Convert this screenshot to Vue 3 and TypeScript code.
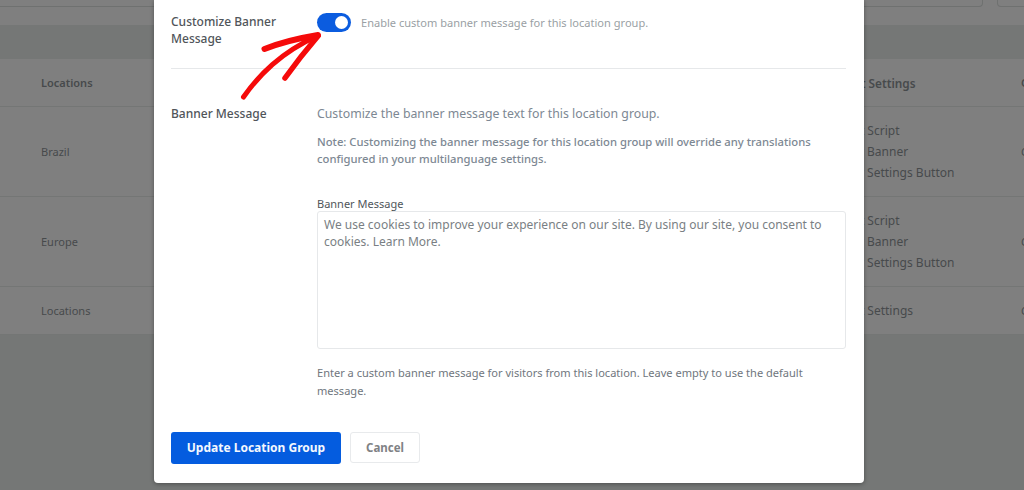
<script setup lang="ts">
interface Row {
  name: string;
  lines: string[];
}

const rows: Row[] = [
  { name: 'Brazil', lines: ['Default Script', 'Display Banner', 'Display Settings Button'] },
  { name: 'Europe', lines: ['Default Script', 'Display Banner', 'Display Settings Button'] },
];
</script>

<template>
  <div class="page">
    <div class="toolbar">
      <div class="field field-main"></div>
      <div class="field field-side"></div>
    </div>
    <div class="band"></div>
    <div class="row row-head">
      <span class="col-name">Locations</span>
      <span class="col-settings">Default Settings</span>
      <span class="col-last">Custom</span>
    </div>
    <div v-for="row in rows" :key="row.name" class="row row-body">
      <span class="col-name">{{ row.name }}</span>
      <div class="col-settings">
        <div v-for="line in row.lines" :key="line" class="line">{{ line }}</div>
      </div>
      <span class="col-last">Custom</span>
    </div>
    <div class="row row-foot">
      <span class="col-name">Locations</span>
      <span class="col-settings">Default Settings</span>
      <span class="col-last">Custom</span>
    </div>

    <div class="modal">
      <section class="setting setting-toggle">
        <div class="label">Customize Banner Message</div>
        <div class="toggle-wrap">
          <span class="toggle"><span class="knob"></span></span>
          <span class="toggle-desc">Enable custom banner message for this location group.</span>
        </div>
      </section>
      <hr class="divider" />
      <section class="setting">
        <div class="label">Banner Message</div>
        <div class="setting-body">
          <p class="intro">Customize the banner message text for this location group.</p>
          <p class="note">Note: Customizing the banner message for this location group will override any translations configured in your multilanguage settings.</p>
          <label class="field-label">Banner Message</label>
          <div class="textarea">We use cookies to improve your experience on our site. By using our site, you consent to cookies. Learn More.</div>
          <p class="help">Enter a custom banner message for visitors from this location. Leave empty to use the default message.</p>
        </div>
      </section>
      <div class="actions">
        <button class="btn btn-primary">Update Location Group</button>
        <button class="btn btn-cancel">Cancel</button>
      </div>
    </div>

    <svg class="arrow" width="1024" height="490" viewBox="0 0 1024 490" fill="none">
      <path d="M243.500 97C259 75 280 53 318 35.500" stroke="#f50a0a" stroke-width="5" stroke-linecap="round" />
      <path d="M264.500 49C282 42 300 38 318 35" stroke="#f50a0a" stroke-width="6" stroke-linecap="round" />
      <path d="M318 36C306 50 295 64 285 78" stroke="#f50a0a" stroke-width="5.500" stroke-linecap="round" />
    </svg>
  </div>
</template>

<style>
html,
body {
  margin: 0;
  background: #757776;
}
</style>

<style scoped>
.page {
  position: relative;
  width: 1024px;
  height: 490px;
  overflow: hidden;
  background: #757776;
  font-family: "Noto Sans", sans-serif;
  font-size: 11px;
  color: #474a4c;
}
.toolbar {
  height: 25px;
  background: #7f7f7f;
  position: relative;
  display: flex;
  gap: 14px;
  margin-left: -10px;
  width: 1060px;
}
.field {
  height: 6px;
  margin-top: 0;
  border: 1px solid #6f7170;
  border-top: none;
  border-radius: 0 0 4px 4px;
  box-sizing: content-box;
}
.field-main {
  width: 991px;
}
.field-side {
  width: 40px;
}
.band {
  height: 34px;
}
.row {
  display: flex;
  align-items: center;
  background: #7f7f7f;
  border-bottom: 1px solid #747675;
  box-sizing: border-box;
  padding-left: 41px;
  white-space: nowrap;
}
.row-head {
  height: 48px;
  font-weight: 600;
}
.row-body {
  height: 90px;
}
.row-foot {
  height: 48px;
}
.col-name {
  width: 782px;
  flex: none;
}
.col-settings {
  width: 198px;
  flex: none;
  font-size: 12px;
}
.row-head .col-settings {
  font-size: 11.800px;
}
.col-last {
  flex: none;
}
.line {
  line-height: 21.300px;
}
.setting {
  display: flex;
}
.modal {
  position: absolute;
  left: 154px;
  top: 0;
  width: 710px;
  height: 483px;
  box-sizing: border-box;
  padding: 13px 18px 0 17px;
  background: #fff;
  border-radius: 0 0 4px 4px;
  box-shadow: 0 1px 4px rgba(0, 0, 0, 0.35);
  display: flex;
  flex-direction: column;
}
.label {
  width: 146px;
  flex: none;
  font-weight: 500;
  font-size: 12px;
  line-height: 17px;
  color: #50555a;
  padding-right: 20px;
  box-sizing: border-box;
}
.setting-toggle {
  height: 55px;
}
.toggle-wrap {
  display: flex;
  align-items: flex-start;
  gap: 10px;
}
.toggle {
  width: 34px;
  height: 19px;
  border-radius: 10px;
  background: #0b5cdf;
  position: relative;
  flex: none;
}
.knob {
  position: absolute;
  right: 3px;
  top: 3px;
  width: 13px;
  height: 13px;
  border-radius: 50%;
  background: #fff;
}
.toggle-desc {
  font-size: 11.050px;
  line-height: 19px;
  color: #9a9fa4;
}
.divider {
  border: none;
  border-top: 1px solid #e6e8ea;
  margin: 0 0 36px;
  width: 100%;
}
.setting-body {
  flex: 1;
  min-width: 0;
}
.intro {
  margin: 0 0 10px;
  font-size: 12.300px;
  line-height: 17.500px;
  color: #7d8893;
}
.note {
  margin: 0 0 29px;
  font-size: 11.250px;
  font-weight: 500;
  line-height: 17.500px;
  color: #7d8893;
}
.field-label {
  display: block;
  font-size: 11px;
  line-height: 14px;
  color: #50555a;
}
.textarea {
  height: 138px;
  box-sizing: border-box;
  border: 1px solid #e6e8ea;
  border-radius: 3px;
  padding: 4px 6px;
  font-size: 12px;
  line-height: 17.500px;
  color: #7a7f84;
}
.help {
  margin: 15px 0 0;
  font-size: 11.050px;
  line-height: 18.500px;
  color: #6f767d;
}
.actions {
  display: flex;
  align-items: flex-start;
  gap: 9px;
  margin-top: 31px;
}
.btn {
  font-family: inherit;
  font-size: 12px;
  font-weight: 700;
  border-radius: 3px;
  box-sizing: border-box;
  padding: 0;
}
.btn-primary {
  width: 170px;
  height: 32px;
  border: none;
  background: #045cdf;
  color: #f4f8fe;
}
.btn-cancel {
  width: 70px;
  height: 31px;
  border: 1px solid #e8eaec;
  background: #fff;
  color: #7f8285;
  font-size: 11.500px;
}
.arrow {
  position: absolute;
  left: 0;
  top: 0;
  pointer-events: none;
}
</style>
